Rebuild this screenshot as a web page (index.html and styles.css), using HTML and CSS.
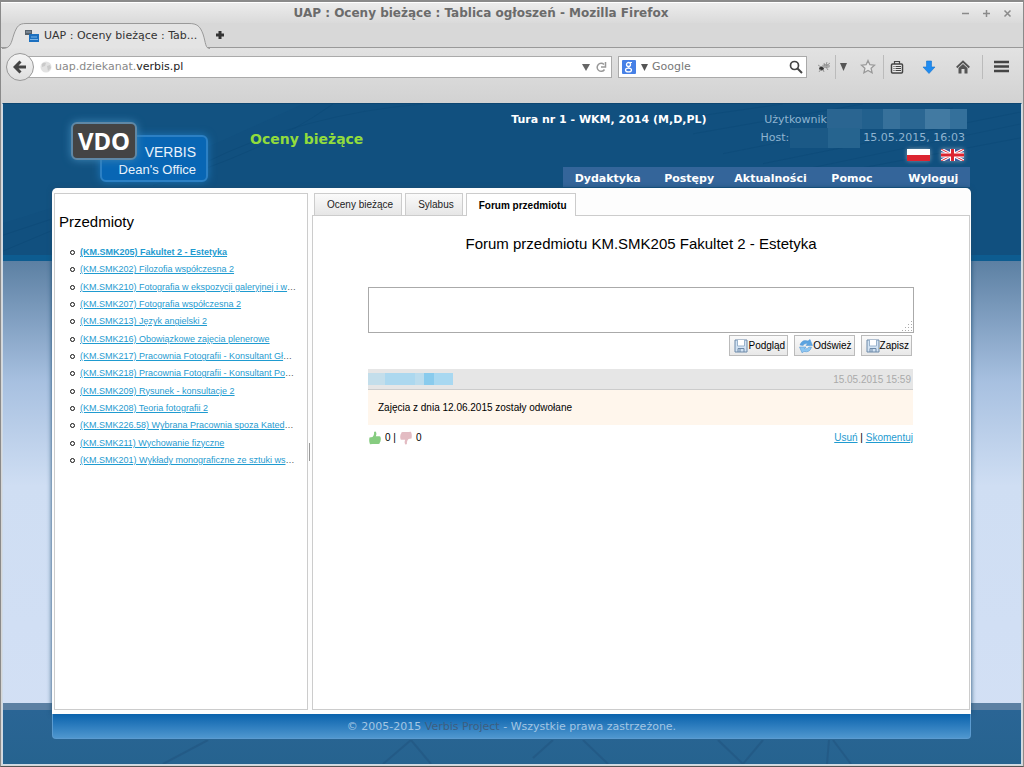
FILE: index.html
```html
<!DOCTYPE html>
<html lang="pl">
<head>
<meta charset="utf-8">
<title>UAP : Oceny bieżące : Tablica ogłoszeń</title>
<link rel="stylesheet" href="styles.css">
</head>
<body>
<div class="window">
  <div class="titlebar">
    <span class="title">UAP : Oceny bieżące : Tablica ogłoszeń - Mozilla Firefox</span>
    <div class="wincontrols">
      <button aria-label="Minimalizuj"><svg width="9" height="9"><path d="M1 4.500h7" /></svg></button>
      <button aria-label="Maksymalizuj"><svg width="9" height="9"><path d="M1 4.500h7M4.500 1v7" /></svg></button>
      <button aria-label="Zamknij"><svg width="9" height="9"><path d="M1.500 1.500l6 6M7.500 1.500l-6 6" /></svg></button>
    </div>
  </div>
  <div class="tabstrip">
    <div class="tab">
      <svg class="tabshape" width="208" height="26" viewBox="0 0 208 26"><path d="M0 25.500C9 25.500 9 20 12 11C15 3 17 .5 24 .5H187C195 .5 198 3 201 11C204 20 203 25.500 208 25.500" /></svg>
      <svg width="14" height="12" viewBox="0 0 14 12"><path d="M0 0h7v5H0z" fill="#56616b"/><path d="M4 4h10v8H4z" fill="#1c70c0"/><path d="M6 7h6M5 9.500h8" stroke="#79b5e8"/><path d="M1 2h5" stroke="#9ab"/></svg>
      <span>UAP : Oceny bieżące : Tab...</span>
    </div>
    <button class="newtab" aria-label="Nowa karta"><svg width="10" height="10"><path d="M5 1v8M1 5h8" stroke="#333" stroke-width="3"/></svg></button>
  </div>
  <div class="toolbar">
    <button class="back" aria-label="Wstecz"><svg width="14" height="14" viewBox="0 0 14 14"><path d="M7.500 1.500L2 7l5.500 5.500M2.500 7H13" fill="none" stroke="#444" stroke-width="3"/></svg></button>
    <div class="urlbar">
      <svg width="12" height="12" viewBox="0 0 12 12"><circle cx="6" cy="6" r="5.500" fill="#e2e2e2"/><path d="M2 3q2-2 4-1l-1 3-3 1zM7 5l3-1 1 3-3 3z" fill="#cacaca"/></svg>
      <span class="url">uap.dziekanat.<b>verbis.pl</b></span>
      <svg width="8" height="8"><path d="M0 1h8L4 8z" fill="#666"/></svg>
      <svg width="12" height="12" viewBox="0 0 12 12"><path d="M9.500 8.500A4 4 0 1 1 9 3.500" fill="none" stroke="#999" stroke-width="1.500"/><path d="M10.500 1v5H6" fill="none" stroke="#999" stroke-width="1.500"/></svg>
    </div>
    <div class="searchbar">
      <svg width="14" height="14" viewBox="0 0 14 14"><rect width="14" height="14" rx="1" fill="#4680e6"/><circle cx="6.500" cy="4.500" r="2" fill="none" stroke="#fff" stroke-width="1.300"/><ellipse cx="6.500" cy="10" rx="3" ry="1.900" fill="none" stroke="#fff" stroke-width="1.300"/><path d="M8 2.500h2M7 6.500q-2 1 1 2" stroke="#fff" fill="none"/></svg>
      <svg width="8" height="8"><path d="M1 1h7L4.500 8z" fill="#555"/></svg>
      <input type="text" placeholder="Google" aria-label="Szukaj">
      <svg width="14" height="14" viewBox="0 0 14 14"><circle cx="5.500" cy="5.500" r="4" fill="none" stroke="#444" stroke-width="1.700"/><path d="M8.500 8.500l4.500 4.500" stroke="#444" stroke-width="2"/></svg>
    </div>
    <div class="tools">
      <button aria-label="Firebug"><svg width="14" height="14" viewBox="0 0 14 14"><ellipse cx="4.500" cy="8.500" rx="2.300" ry="1.900" fill="#333"/><ellipse cx="9" cy="6" rx="4" ry="2" fill="#aaa"/><path d="M1 5l3 2M7 3l1 3M10 2l-1 3M6 9l1 3M9 7l2 3M13 3l-4 3M2 12l2-3" stroke="#888" stroke-width=".8"/></svg></button>
      <i class="sep"></i>
      <button aria-label="Rozwiń"><svg width="8" height="8"><path d="M0 0h7L3.500 8z" fill="#555"/></svg></button>
      <button class="star" aria-label="Dodaj zakładkę"><svg width="16" height="15" viewBox="0 0 16 15"><path d="M8 1.500l1.900 4.200 4.600.5-3.400 3.100 1 4.500L8 11.500l-4.100 2.300 1-4.500L1.500 6.200l4.600-.5z" fill="#e8e8e8" stroke="#9a9a9a" stroke-width="1.300"/></svg></button>
      <i class="sep"></i>
      <button class="list" aria-label="Zakładki"><svg width="14" height="14" viewBox="0 0 14 14"><rect x="1.500" y="4" width="11" height="9" rx="1" fill="#e8e8e8" stroke="#444" stroke-width="1.500"/><path d="M4.500 4V1.500h5V4M3.500 6.500h1M3.500 8.500h1M3.500 10.500h1M5.500 6.500h5.500M5.500 8.500h5.500M5.500 10.500h5.500" fill="none" stroke="#444" stroke-width="1.200"/></svg></button>
      <button class="wide" aria-label="Pobrane"><svg width="14" height="14" viewBox="0 0 14 14"><path d="M4.500 1h5v6H13l-6 6.500L1 7h3.500z" fill="#1f8bf0" stroke="#1873cc" stroke-width=".6"/></svg></button>
      <button class="wide" aria-label="Strona startowa"><svg width="14" height="14" viewBox="0 0 14 14"><path d="M.7 7.500L7 1.500l6.300 6" fill="none" stroke="#555" stroke-width="1.800"/><path d="M2.500 8L7 4l4.500 4v5.500h-3V9h-3v4.500h-3z" fill="#555"/></svg></button>
      <i class="sep"></i>
      <button class="menu" aria-label="Menu"><svg width="15" height="13"><path d="M0 2h15M0 6.500h15M0 11h15" stroke="#444" stroke-width="2.500"/></svg></button>
    </div>
  </div>
  <div class="page">
    <svg class="decor top" viewBox="0 0 1018 158" preserveAspectRatio="none"><g fill="none" stroke="#0b4673" opacity=".4"><path d="M200 60Q300 10 420 0M150 82Q260 50 330 0"/><path d="M0 132L60 112M0 148L90 110" /><path d="M690 30L860 0M720 50L950 4M760 60L1018 8M800 66L1018 20M850 66L1018 34M640 20L780 0"/></g><path d="M0 0H300L120 82L0 120z" fill="#1a6190" opacity=".15"/><path d="M0 152h1018v6H0z" fill="#0d5c90"/></svg>
    <svg class="decor bottom" viewBox="0 0 1018 24" preserveAspectRatio="none"><path d="M160 24L205 0M380 24L408 0L428 24M530 18L550 0M580 0L605 24M715 0L740 24L760 0M830 0L848 24M826 0L824 24" fill="none" stroke="#225580" stroke-width="2" opacity=".6"/></svg>
    <header class="header">
      <div class="logo"><div class="verbis">VERBIS<br><small>Dean's Office</small></div><div class="vdo">VDO</div></div>
      <h1>Oceny bieżące</h1>
      <div class="info">
        <div class="inforow">
          <strong>Tura nr 1 - WKM, 2014 (M,D,PL)</strong>
          <div class="user">
            <div class="line">Użytkownik<i class="mask one"></i></div>
            <div class="line">Host:<i class="mask two"></i>15.05.2015, 16:03</div>
            <div class="flags">
              <a href="#" aria-label="Polski"><svg width="23" height="12"><path d="M0 0h23v6H0z" fill="#fff"/><path d="M0 6h23v6H0z" fill="#dc2430"/></svg></a>
              <a href="#" aria-label="English"><svg width="23" height="12" viewBox="0 0 23 12"><path d="M0 0h23v12H0z" fill="#3c5a9c"/><path d="M0 0l23 12M23 0L0 12" stroke="#fff" stroke-width="3"/><path d="M0 0l23 12M23 0L0 12" stroke="#dc2430"/><path d="M11.500 0v12M0 6h23" stroke="#fff" stroke-width="5"/><path d="M11.500 0v12M0 6h23" stroke="#dc2430" stroke-width="3"/></svg></a>
            </div>
          </div>
        </div>
        <nav class="nav"><a href="#">Dydaktyka</a><a href="#">Postępy</a><a href="#">Aktualności</a><a href="#">Pomoc</a><a href="#">Wyloguj</a></nav>
      </div>
    </header>
    <div class="panel">
      <aside class="sidebar">
        <h2>Przedmioty</h2>
        <ul>
          <li><a class="current" href="#">(KM.SMK205) Fakultet 2 - Estetyka</a></li>
          <li><a href="#">(KM.SMK202) Filozofia współczesna 2</a></li>
          <li><a href="#">(KM.SMK210) Fotografia w ekspozycji galeryjnej i w</a>…</li>
          <li><a href="#">(KM.SMK207) Fotografia współczesna 2</a></li>
          <li><a href="#">(KM.SMK213) Język angielski 2</a></li>
          <li><a href="#">(KM.SMK216) Obowiązkowe zajęcia plenerowe</a></li>
          <li><a href="#">(KM.SMK217) Pracownia Fotografii - Konsultant Gł</a>…</li>
          <li><a href="#">(KM.SMK218) Pracownia Fotografii - Konsultant Po</a>…</li>
          <li><a href="#">(KM.SMK209) Rysunek - konsultacje 2</a></li>
          <li><a href="#">(KM.SMK208) Teoria fotografii 2</a></li>
          <li><a href="#">(KM.SMK226.58) Wybrana Pracownia spoza Kated</a>…</li>
          <li><a href="#">(KM.SMK211) Wychowanie fizyczne</a></li>
          <li><a href="#">(KM.SMK201) Wykłady monograficzne ze sztuki ws</a>…</li>
        </ul>
      </aside>
      <div class="splitter"><i></i></div>
      <main class="main">
        <div class="tabs"><button>Oceny bieżące</button><button>Sylabus</button><button class="active">Forum przedmiotu</button></div>
        <div class="content">
          <h2>Forum przedmiotu KM.SMK205 Fakultet 2 - Estetyka</h2>
          <div class="editor">
            <textarea aria-label="Treść wpisu"></textarea>
            <svg class="grip" width="11" height="11"><path d="M9.500 0v11M6.500 3v8M3.500 6v5M.5 9v2" stroke="#aaa" stroke-dasharray="1 2"/></svg>
          </div>
          <div class="actions">
            <button><svg width="14" height="14" viewBox="0 0 14 14"><path d="M1 1h12v12H1z" fill="#d3e3f3" stroke="#6d89a8"/><path d="M3.500 1v6h7V1" fill="#fff" stroke="#9ab3cc"/><path d="M4 13V9.500h6V13M6 10v3" fill="none" stroke="#6d89a8"/></svg>Podgląd</button>
            <button><svg width="14" height="14" viewBox="0 0 14 14"><path d="M1 6Q3 0 9 2L11 .5 13.500 6.500 7 6.500 8.500 4.800Q5.500 4 4 6.500z" fill="#5ba3e0" stroke="#4a90d0" stroke-width=".5"/><path d="M12.500 8Q11 14 5 12.500L3 13.800.5 8 7 8 5.500 9.700Q8.500 10.500 10 8z" fill="#8cc6f2" stroke="#4a90d0" stroke-width=".5"/></svg>Odśwież</button>
            <button><svg width="14" height="14" viewBox="0 0 14 14"><path d="M1 1h12v12H1z" fill="#d3e3f3" stroke="#6d89a8"/><path d="M3.500 1v6h7V1" fill="#fff" stroke="#9ab3cc"/><path d="M4 13V9.500h6V13M6 10v3" fill="none" stroke="#6d89a8"/></svg>Zapisz</button>
          </div>
          <article class="post">
            <div class="posthead"><i class="author"></i><time>15.05.2015 15:59</time></div>
            <p>Zajęcia z dnia 12.06.2015 zostały odwołane</p>
            <div class="postfoot">
              <div class="votes">
                <svg width="12" height="14" viewBox="0 0 12 14"><path d="M.5 6.500L3.500 6Q5.500 4 5 1.500 5.500.2 6.800.8 8 2.500 6.800 5.200H10.500q1.500.3 1 1.800.8 1 0 2 .5 1.300-.5 2 0 1.800-1.500 2L3.500 13 1 13.300Q-.3 10 .5 6.500z" fill="#86cc80"/></svg>
                <span>0 |</span>
                <svg width="12" height="14" viewBox="0 0 12 14"><path d="M11.500 7.500L8.500 8Q6.500 10 7 12.500 6.500 13.800 5.200 13.200 4 11.500 5.200 8.800H1.500Q0 8.500.5 7-.3 6 .5 5 0 3.700 1 3 1 1.200 2.500 1L8.500 1 11 .7Q12.300 4 11.500 7.500z" fill="#e3bcc3"/></svg>
                <span>0</span>
              </div>
              <div><a href="#">Usuń</a> | <a href="#">Skomentuj</a></div>
            </div>
          </article>
        </div>
      </main>
    </div>
    <footer class="footer">© 2005-2015 <a href="#">Verbis Project</a> - Wszystkie prawa zastrzeżone.</footer>
  </div>
</div>
</body>
</html>
```
FILE: styles.css
```css
*, *::before { box-sizing: border-box; }
body { margin: 0; font-family: "DejaVu Sans", sans-serif; font-size: 11px; color: #000; }
button { margin: 0; padding: 0; border: 0; background: none; font: inherit; color: inherit; display: flex; align-items: center; justify-content: center; }
svg { display: block; flex: none; }
h1, h2, p, ul { margin: 0; padding: 0; font-weight: normal; }

.window { display: flex; flex-direction: column; min-height: 100vh; background: #d6d6d6; border: solid #8a8a8a; border-width: 2px 1px 1px; border-bottom-color: #555; }
.titlebar { position: relative; display: flex; align-items: center; justify-content: center; height: 21px; padding-right: 62px; background: linear-gradient(#ececec, #dadada); border-top: 1px solid #fff; }
.title { font-size: 12px; font-weight: bold; color: #6b6b6b; }
.wincontrols { position: absolute; right: 11px; top: 6px; display: flex; gap: 12px; }
.wincontrols path { fill: none; stroke: #8a8a8a; stroke-width: 1.500; }
.tabstrip { display: flex; height: 25px; background: #d8d8d8; border-bottom: 1px solid #999; }
.tab { position: relative; display: flex; align-items: center; gap: 5px; width: 208px; height: 25px; margin-left: 1px; padding-left: 23px; color: #333; }
.tab > * { position: relative; }
.tab .tabshape { position: absolute; left: 0; top: 0; fill: #e4e4e4; stroke: #999; }
.newtab { width: 20px; }
.toolbar { display: flex; align-items: center; height: 55px; padding: 0 14px 18px 5px; background: linear-gradient(#e2e2e2, #d2d2d2); }
.back { position: relative; width: 28px; height: 28px; margin-right: -6px; border: 1px solid #999; border-radius: 50%; background: linear-gradient(#f4f4f4, #dedede); z-index: 1; flex: none; }
.urlbar, .searchbar { display: flex; align-items: center; height: 22px; background: #fff; border: 1px solid #aaa; }
.urlbar { flex: 1; gap: 5px; padding: 0 4px 0 11px; }
.url { flex: 1; margin-left: -2px; color: #888; }
.url b { font-weight: normal; color: #222; }
.searchbar { width: 189px; margin-left: 6px; padding: 0 3px; gap: 4px; }
.searchbar input { flex: 1; min-width: 0; padding: 0; border: 0; font: inherit; color: #777; background: none; }
.searchbar input::placeholder { color: #777; opacity: 1; }
.tools { display: flex; align-items: center; gap: 4px; margin-left: 10px; }
.sep { width: 1px; height: 24px; background: #bbb; }
.star { margin-left: 8px; margin-right: 3px; }
.list { margin-left: 2px; margin-right: 6px; }
.tools .wide { width: 30px; }
.menu { margin-left: 7px; }

.page { position: relative; flex: 1; display: flex; flex-direction: column; margin: 0 1px 1px; padding: 0 50px 25px 49px; border: 1px solid #cfdbe6; border-top-color: #0d4671; background: linear-gradient(#2a6595, #26638f) bottom / 100% 54px no-repeat, linear-gradient(#5c80a3, #5c80a3) bottom / 100% 61px no-repeat, linear-gradient(#11507f, #11507f) top / 100% 157px no-repeat, linear-gradient(#5c80a3 157px, #a7c0e0 277px, #cfdef3 382px, #d3e0f5); }
.decor { position: absolute; left: 0; width: 100%; }
.decor.top { top: 0; height: 157px; }
.decor.bottom { bottom: 0; height: 24px; }
.header { position: relative; display: flex; height: 84px; }
.logo { position: relative; width: 198px; }
.verbis { position: absolute; left: 48px; top: 31px; width: 108px; height: 47px; padding: 7px 10px; border: 2px solid #2c80c4; border-radius: 6px; background: #0866b4; box-shadow: 0 0 8px #1d76b8; color: #e8f3fc; font: 14px/17px "Liberation Sans", sans-serif; text-align: right; }
.verbis small { font-size: 13px; }
.vdo { position: absolute; left: 19px; top: 18px; width: 66px; height: 38px; border: 2px solid #5f88a6; border-radius: 6px; background: #444; box-shadow: 0 0 8px #3f86b5; color: #fff; font: bold 24px/34px "Noto Sans", sans-serif; text-align: center; }
.header h1 { padding-top: 26px; font-size: 14px; line-height: 18px; font-weight: bold; color: #92dc3c; }
.info { flex: 1; display: flex; flex-direction: column; justify-content: space-between; align-items: flex-end; padding-bottom: 1px; }
.inforow { display: flex; gap: 54px; padding: 6px 6px 0 0; color: #8fb4d0; line-height: 19px; }
.inforow strong { color: #fff; }
.user { display: flex; flex-direction: column; align-items: flex-end; }
.line { display: flex; height: 18px; }
.mask { background: linear-gradient(90deg, #2a6591 25%, #22608d 25% 40%, #37719b 40% 52%, #2b6793 52% 70%, #427aa2 70% 88%, #34709b 88%); }
.mask.one { width: 140px; height: 20px; margin-top: -1px; margin-right: -2px; }
.mask.two { width: 70px; height: 20px; margin: 0 3px 0 1px; background: linear-gradient(90deg, #1b5986 55%, #26648f 55%); }
.flags { display: flex; gap: 11px; padding: 3px 1px 0 0; }
.flags svg { box-shadow: 0 0 4px #7d99ad; }
.nav { display: flex; height: 20px; width: 407px; margin-right: 1px; background: #34659a; font-weight: bold; line-height: 23px; }
.nav a { flex: 1 1 0; padding-left: 8px; color: #fff; text-align: center; text-decoration: none; }

.panel { position: relative; flex: 1; display: flex; padding: 5px 1px 4px 2px; border-radius: 5px 5px 0 0; background: #fdfdfd; box-shadow: 0 0 5px #1c4b70; font-family: "Liberation Sans", sans-serif; font-size: 10px; }
.sidebar { width: 254px; padding: 18px 4px; border: 1px solid #ccc; background: #fff; }
.sidebar h2 { font-size: 15px; line-height: 19px; }
.sidebar ul { display: flex; flex-direction: column; justify-content: space-between; height: 221px; margin-top: 15px; padding-left: 21px; list-style: none; font-size: 9px; line-height: 13px; white-space: nowrap; color: #555; }
.sidebar li { display: flex; }
.sidebar li::before { content: ""; flex: none; width: 5px; height: 5px; margin: 4px 5px 0 -10px; border: 1px solid #111; border-radius: 50%; }
a { color: #1f9bd0; }
.sidebar .current { font-weight: bold; }
.splitter { display: flex; align-items: center; width: 4px; }
.splitter i { width: 1px; height: 18px; margin-left: 1px; background: #999; }
.main { flex: 1; display: flex; flex-direction: column; }
.tabs { display: flex; gap: 3px; padding-left: 2px; }
.tabs button { height: 22px; padding: 0 8px 0 12px; border: 1px solid #ccc; border-bottom: 0; background: linear-gradient(#fafafa, #e6e6e6); color: #222; }
.tabs .active { position: relative; height: 23px; margin-bottom: -1px; background: #fff; font-weight: bold; color: #000; }
.content { flex: 1; padding: 19px 55px; border: 1px solid #ccc; background: #fff; }
.content h2 { font-size: 15px; line-height: 18px; text-align: center; }
.editor { position: relative; margin-top: 34px; }
textarea { display: block; width: 100%; height: 46px; border: 1px solid #aaa; resize: none; background: #fff; }
.grip { position: absolute; right: 1px; bottom: 1px; }
.actions { display: flex; justify-content: flex-end; gap: 6px; padding: 2px 2px 0; }
.actions button { height: 21px; padding: 0 2px 0 4px; border: 1px solid #bbb; background: linear-gradient(#fafafa, #e8e8e8); }
.post { margin: 13px 1px 0 0; }
.posthead { display: flex; align-items: center; justify-content: space-between; height: 21px; padding-right: 2px; background: #e6e6e6; border-bottom: 1px solid #ccc; color: #aaa; }
.author { width: 85px; height: 12px; background: linear-gradient(90deg, #c3deeb 20%, #acd8ef 20% 55%, #bbdced 55% 66%, #89cbed 66% 78%, #a8d8f1 78%); }
.post p { padding: 11px 10px; background: #fff6ec; line-height: 13px; }
.postfoot { display: flex; align-items: center; justify-content: space-between; padding-top: 5px; line-height: 16px; }
.votes { display: flex; align-items: center; gap: 4px; padding-left: 1px; }
.footer { position: relative; height: 25px; border: solid #5b9bd0; border-width: 0 1px 1px; border-radius: 0 0 4px 4px; background: linear-gradient(#0a62ac, #4f97cf); color: #a3c6e4; line-height: 26px; text-align: center; }
.footer a { color: #3d5e80; text-decoration: none; }
```
